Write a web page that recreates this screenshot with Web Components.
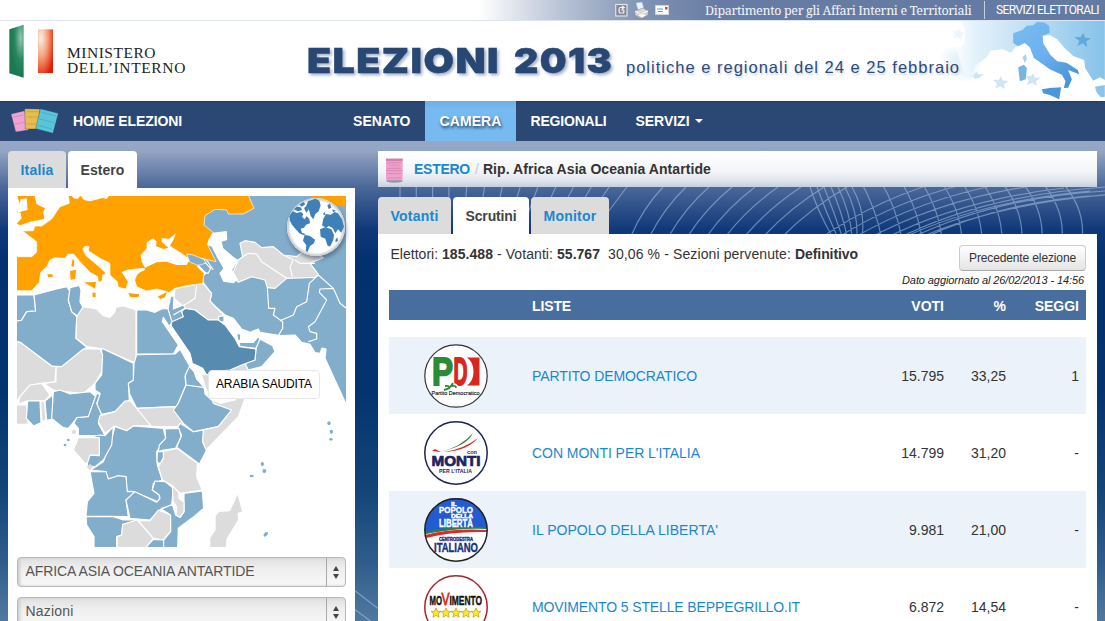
<!DOCTYPE html>
<html lang="it">
<head>
<meta charset="utf-8">
<title>Elezioni 2013</title>
<style>
html,body{margin:0;height:621px;overflow:hidden;background:#fff}
body{font:14px "Liberation Sans",Arial,sans-serif;color:#333}
</style>
</head>
<body>
<elezioni-app></elezioni-app>
<script>
const define=(name,html,after)=>customElements.define(name,class extends HTMLElement{
  connectedCallback(){
    if(this.shadowRoot)return;
    const r=this.attachShadow({mode:'open'});
    const t=document.createElement('template');
    t.innerHTML=typeof html==='function'?html(this):html;
    r.appendChild(t.content.cloneNode(true));
    if(after)after(this,r);
  }
});

/* Text whose tracking is adjusted so that it fills the width in its "w" attribute */
define('fit-text','<style>:host{display:inline-block;white-space:pre}span{display:inline-block}</style><span><slot></slot></span>',(el,r)=>{
  const s=r.querySelector('span'),w=+el.getAttribute('w'),n=el.textContent.length;
  el.style.width=w+'px';
  s.style.letterSpacing=((w-s.getBoundingClientRect().width)/n)+'px';
});

define('top-bar',`<style>
:host{display:flex;height:20px;align-items:center;color:#fff;border-bottom:1px solid #dfe5ee;background:linear-gradient(90deg,#fff 478px,#b9c4d6 560px,#8294b5 640px,#677ca3 720px,#637aa2);box-sizing:content-box}
.icons{display:flex;gap:6px;margin-left:615px;width:90px;align-items:center}
.dep{font:12.500px "Noto Serif","Droid Serif","DejaVu Serif Condensed",serif;color:#f3f5f9;line-height:19px}
.sep{width:1px;height:18px;background:#c6cfdd;margin:0 11px 0 13px}
.ser{font:12px Roboto,sans-serif;line-height:19px}
</style><div class="icons">
<svg width="13" height="14" viewBox="0 0 13 14"><rect x=".7" y="1.5" width="11.3" height="11.5" fill="#7f8796" stroke="#e2e4e6" stroke-width="1.2"/><path d="M9 4.5H5.2C3.6 4.5 3.6 10 5.2 10H8.8V7H6M7 3l2.2 1.5L7 6" fill="none" stroke="#f4f4f0" stroke-width="1.2"/></svg>
<svg width="15" height="17" viewBox="0 0 15 17"><path d="M2 1l6-1 2 7-6 1z" fill="#eef5ff" stroke="#9fbbe4" stroke-width=".7"/><path d="M1 9l8-3 5 3v4l-8 3-5-3z" fill="#d9d9d6" stroke="#8f9298" stroke-width=".6"/><path d="M1 9l5 3 8-3" fill="none" stroke="#fff"/><path d="M3 13l5-2 5 2-5 3z" fill="#f8f8f4" stroke="#aaa" stroke-width=".5"/></svg>
<svg width="14" height="10" viewBox="0 0 14 10"><rect x=".5" y=".5" width="13" height="9" fill="#fff" stroke="#cfd3da"/><rect x="10" y="2" width="2.5" height="2.5" fill="#e2451d"/><path d="M2 4h6M3 6.500h5" stroke="#5a9de2" stroke-width="1.2"/></svg>
</div><fit-text class="dep" w="266">Dipartimento per gli Affari Interni e Territoriali</fit-text><span class="sep"></span><fit-text class="ser" w="103">SERVIZI ELETTORALI</fit-text>`);

define('flag-logo',`<style>:host{display:block}svg{display:block}</style>
<svg width="46" height="56" viewBox="29 72 138 168"><defs>
<radialGradient id="g" cx=".8" cy=".25" r=".7"><stop stop-color="#8fc7b0"/><stop offset=".6" stop-color="#28875f"/><stop offset="1" stop-color="#197a52"/></radialGradient>
<radialGradient id="r" cx=".2" cy=".2" r=".95"><stop stop-color="#fff1e8"/><stop offset=".5" stop-color="#f39a72"/><stop offset="1" stop-color="#e21a05"/></radialGradient></defs>
<path d="M30 88L73 74V233L30 220Z" fill="url(#g)"/><path d="M116 88H161V219H116Z" fill="url(#r)"/></svg>`);

define('italy-art',`<style>:host{display:block}svg{display:block}</style>
<svg width="172" height="80" viewBox="1000 63 515 240"><defs>
<linearGradient id="l" gradientUnits="userSpaceOnUse" x1="1060" x2="1515" y1="0" y2="0"><stop stop-color="#fff"/><stop offset=".15" stop-color="#e2f1fb"/><stop offset=".5" stop-color="#bfdff4"/><stop offset="1" stop-color="#86c2e9"/></linearGradient>
<linearGradient id="w" gradientUnits="userSpaceOnUse" x1="1240" x2="1420" y1="70" y2="290"><stop stop-color="#79bcf2"/><stop offset=".45" stop-color="#6cb1ee"/><stop offset="1" stop-color="#3f8ad2"/></linearGradient>
<filter id="b"><feGaussianBlur stdDeviation="12"/></filter></defs>
<path d="M1030 160L1080 150 1150 150 1120 215 1110 235 1060 220Z" fill="#e4f2fb" filter="url(#b)"/>
<path d="M1080 63H1515V240L1500 232 1480 242 1456 205 1453 180 1420 168 1395 145 1372 118 1350 105 1328 108 1330 130 1345 160 1300 150 1275 128 1250 138 1232 158 1210 148 1172 152 1160 172 1125 198 1118 235 1095 225 1070 150 1094 130 1096 85Z" fill="url(#l)"/>
<path d="M1240 100L1268 90 1280 77 1300 76 1312 65 1335 68 1348 78 1350 98 1328 107 1330 130 1352 165 1372 184 1400 188 1434 210 1438 223 1405 210 1416 238 1405 263 1392 264 1397 244 1386 224 1350 208 1328 192 1302 174 1290 142 1275 129 1254 139 1240 128Z" fill="url(#w)"/>
<path d="M1326 268L1350 264 1384 262 1378 298 1350 285 1330 280Z" fill="#4b96db"/><path d="M1255 202L1272 194 1281 204 1278 238 1260 244Z" fill="#78b5e3"/><path d="M1268 172l10-10 3 14-6 14z" fill="#a9d2ef"/>
<path d="M1485 260l30-5v35l-12 2-12-14z" fill="#8cc4ea"/>
<path d="M1450 99l6 14 18 2-15 9 3 18-13-12-17 8 7-15-15-11 19-1z" fill="#5fa9dc"/>
<g fill="#cde5f5"><path d="M1203 228l5 13 19 2-14 9 2 15-13-8-16 6 6-14-13-12 18 1z"/><path d="M1300 220l5 13 17 0-13 10 1 14-13-8-16 6 6-14-8-14 14 2z"/><path d="M1078 84l4 12 13 2-10 8 0 13-11-7-12 4 4-13-8-9 13 0z" fill="#edf6fc"/><path d="M1130 214l5 9 17 0-13 10-14 4-6-10z"/></g></svg>`);

define('site-header',`<style>
:host{display:flex;height:80px;background:#fff;position:relative}
flag-logo{margin:3px 0 0 9px}
.min{margin:24px 0 0 12px;width:240px;font:15.500px "Liberation Serif",serif;line-height:15px;color:#222;display:flex;flex-direction:column}
h1{margin:15px 0 0;width:306px;height:50px}
h1 svg{display:block;overflow:visible;filter:drop-shadow(2px 2px 1.500px #a4b1c9)}
p{margin:34px 0 0 13px;font-size:16.500px;line-height:24px;color:#2c4b7b;text-shadow:1px 2px 2px #c8d0de}
italy-art{position:absolute;right:0;top:0;z-index:0}p,h1{position:relative;z-index:1}
</style><flag-logo></flag-logo><div class="min"><fit-text w="89">MINISTERO</fit-text><fit-text w="119">DELL’INTERNO</fit-text></div>
<h1><svg width="306" height="50" font-family="Inter,'Arial Black',sans-serif" font-weight="900" font-size="34.500" letter-spacing="1.300" fill="#294773" stroke="#294773" stroke-width=".5"><text x="0" y="37" textLength="193" lengthAdjust="spacingAndGlyphs">ELEZIONI</text><text x="207" y="37" textLength="99" lengthAdjust="spacingAndGlyphs">2013</text></svg></h1><p><fit-text w="334">politiche e regionali del 24 e 25 febbraio</fit-text></p><italy-art></italy-art>`);

define('ballot-icon',`<style>:host{display:block}svg{display:block}</style><svg width="50" height="28" viewBox="0 0 150 84">
<g stroke="#20365a" stroke-width="1"><path d="M3 24L44 14 56 72 17 78Z" fill="#efa3d3"/><path d="M44 8L90 9 84 69 46 69Z" fill="#e7bd4e"/><path d="M91 8L145 22 129 82 77 68Z" fill="#58c5da"/></g>
<g fill="none" stroke="#4b5665" stroke-width="1.500" opacity=".45"><path d="M8 34l32-7M14 55l31-6M50 17h34M51 33h32M50 54h30M95 19l43 11M89 39l43 11M84 58l42 11"/></g></svg>`);

define('nav-item',`<style>
:host{display:flex;align-items:center;font-weight:bold;color:#fff;padding:0 14.500px;height:40px;gap:5px}
:host([active]){background:linear-gradient(#6eaee3,#77baf0 8px);text-shadow:1px 2px 3px #1e3e68}
i{border:4px solid transparent;border-top-color:#fff;border-bottom:0}
</style><slot></slot>`,(el,r)=>{if(el.hasAttribute('menu'))r.appendChild(document.createElement('i'))});

define('site-nav',`<style>
:host{display:flex;height:40px;background:linear-gradient(#223d68,#2b4874 3px);align-items:center}
ballot-icon{margin:-3px 0 0 10px;width:63px}b{color:#fff;width:265.500px}
</style><ballot-icon></ballot-icon><b><fit-text w="109">HOME ELEZIONI</fit-text></b>
<nav-item><fit-text w="57.500">SENATO</fit-text></nav-item><nav-item active><fit-text w="62">CAMERA</fit-text></nav-item><nav-item><fit-text w="76">REGIONALI</fit-text></nav-item><nav-item menu><fit-text w="54">SERVIZI</fit-text></nav-item>`);

define('tab-item',`<style>
:host{display:block;box-sizing:border-box;height:37px;padding:1px 12.500px 0;line-height:36px;font-weight:bold;color:#1a87d2;background:#dcdcdc;border-radius:4px 4px 0 0}
:host([active]){background:#fff;color:#444}
</style><slot></slot>`);
define('tab-strip','<style>:host{display:flex;gap:2px}</style><slot></slot>');

define('globe-badge',`<style>:host{display:block;width:58px;height:58px;border-radius:50%;background:#fff;box-shadow:1px 3px 4px #3a4a5a99,inset 0 0 2px 2px #c9ced3}svg{display:block}</style>
<svg width="58" height="58" viewBox="863 158 174 174" fill="#3f80b9">
<path d="M870 212L880 198 892 203 905 200 912 206 908 214 916 222 922 212 930 222 932 234 920 238 914 247 904 250 908 262 918 266 914 270 900 264 888 250 878 238 872 226Z"/>
<path d="M884 192l8-8 12 2 4 8-12 4zM900 178l12-8 6 6-10 8zM914 188l8-6 5 12-6 8z"/>
<path d="M926 168L948 160 960 166 964 180 958 198 948 206 942 222 934 212 930 196 920 184Z"/>
<path d="M916 268L932 272 947 283 944 294 932 302 924 321 919 316 921 300 911 286Z"/>
<path d="M972 220L980 206 994 208 1006 200 1016 204 1028 222 1034 244 1026 262 1016 252 1008 264 1000 248 988 242 980 248 968 240Z"/>
<path d="M962 252L978 246 996 252 1004 268 1002 284 992 304 984 300 978 280 964 274Z"/><path d="M984 180l8-5 4 12-8 4zM998 192l12 4-8 5zM1008 284l6-8 2 10-7 5zM972 204l5-4 1 8-5 2z"/></svg>`);

define('world-map',`<style>
:host{display:block;position:relative;width:329px;height:351px;flex:none}
svg{display:block}
.b path{fill:#82aecb;stroke:#fff;stroke-width:3.500;stroke-linejoin:round}.b .g{fill:#dcdcdc}.o{fill:#ffa200}.w path{fill:#fff}
globe-badge{position:absolute;left:270px;top:2px}
.tip{position:absolute;left:191px;top:174px;width:110px;height:27px;border:1px solid #e8e8e8;border-radius:4px;background:#fff;color:#000;font-size:12px;line-height:27px;text-align:center;box-sizing:content-box}
</style>
<svg width="329" height="351" viewBox="51 153 987 1053">
<g class="b">
<path d="M745 150H1042V785L975 640 978 612 966 609 960 625 945 623 930 598 905 592 885 570 840 572 780 562 775 552 750 562 725 552 700 520 675 510 630 470 634 445 608 410 608 392 618 385 560 325 600 200Z"/>
<path class="g" d="M720 295L735 287 765 292 785 308 820 305 850 330 890 335 905 322 935 318 970 338 930 355 955 388 945 397 860 400 825 430 802 428 795 405 755 395 715 412 698 385 715 345 728 335Z"/>
<path class="g" d="M525 430L608 415 635 445 630 468 670 510 655 525 625 525 585 495 555 490 545 480 522 460Z"/>
<path d="M512 455L522 452 520 492 550 480 557 490 545 500 550 515 530 530 514 530 504 492Z"/>
<path class="g" d="M735 645L745 675 700 700 620 740 605 690 640 680Z"/>
<path d="M768 608L765 645 735 655 745 675 785 665 825 620 818 602 780 582 770 592Z"/>
<path d="M717 592L760 592 775 575 780 582 768 610 720 605Z"/><path d="M710 565l12 2v20l-9-2zM655 515l17-3v20l-15-3z"/>
<path style="fill:#588bb0" d="M555 490L585 495 625 525 655 525 675 540 705 580 718 605 768 612 765 645 725 660 690 675 640 680 620 690 608 670 577 655 570 625 515 545 512 532 550 515 545 500Z"/>
<path d="M45 450H102L107 498 80 500 66 526 45 530Z"/>
<path d="M45 528L64 526 80 500 107 498 102 450 170 432 200 425 210 440 205 465 215 500 230 515 228 580 260 607 185 665 155 663 60 592 45 590Z"/>
<path d="M210 428L238 421 243 435 240 470 250 490 235 515 215 500 205 465Z"/>
<path class="g" d="M250 485L290 492 310 512 330 517 345 500 347 487 370 482 408 495V655L310 612 262 605 228 580 230 515Z"/>
<path d="M410 495L440 495 465 502 485 492 503 490 516 530 508 545 490 517 487 530 535 600 520 627H410Z"/>
<path d="M410 629L525 627 540 613 570 665 555 695 558 720 530 785 410 790 388 745 385 715 400 705 402 655Z"/>
<path d="M305 610L400 655V705L385 715 388 765 345 800 305 808 290 780 300 745 285 735 285 715 305 690Z"/>
<path class="g" d="M250 612L300 612 308 630 305 680 285 715 250 745 190 740 160 735 130 715 168 710 168 665 185 665Z"/>
<path class="g" d="M45 590L60 592 155 663 168 665 165 710 125 715 90 722 60 755 45 775Z"/>
<path class="g" d="M55 778L60 755 90 720 125 715 150 750 135 767 80 768Z"/>
<path class="g" d="M45 780H80L85 838H45Z"/><path d="M83 768L120 767 123 833 100 843 79 820Z"/><path class="g" d="M122 768L133 770 138 826 126 829Z"/><path d="M135 768L158 750V822L140 826Z"/>
<path d="M160 740L180 735 210 747 270 740 287 755 265 815 228 822 205 850 190 848 155 820Z"/>
<path d="M290 745L300 748 290 775 305 810 295 835 315 872H235V850L222 835 230 818 265 815Z"/>
<path class="g" d="M300 812L345 800 375 768 390 767 455 842 400 843 380 857 345 842 315 865 295 830Z"/>
<path class="g" d="M410 790L525 785 550 838 530 845 455 845Z"/>
<path d="M345 845L380 857 400 843 490 850 497 880 470 920 472 960 487 1005 460 1015 457 1035 478 1050V1072L402 1040 380 1038 378 995 345 1000 320 1000 318 980 272 975 310 950 330 900Z"/>
<path d="M300 870L315 872 340 845 335 900 310 945 285 965 262 965V930L298 932V883L275 875Z"/>
<path class="g" d="M235 878H298V930L270 930 262 955 255 955 220 915Z"/>
<path d="M270 980H318L325 1002 355 992 378 995 382 1040H402V1055L378 1065 385 1115 258 1113 262 1070 282 1045Z"/>
<path d="M378 1065L405 1040 470 1072 480 1060 478 1050 457 1035 465 1008 495 1010 520 1030 515 1080 485 1090 450 1125 390 1120Z"/>
<path d="M258 1115H340L370 1125 415 1125 368 1140 365 1170 350 1175V1212H282V1175L260 1140Z"/>
<path class="g" d="M368 1138L412 1125 460 1180 435 1212H352V1175L365 1170Z"/>
<path class="g" d="M415 1127L450 1127 475 1095 512 1110V1160L490 1185 460 1180Z"/>
<path d="M435 1210L460 1183 491 1185V1210Z"/>
<path d="M485 1093L517 1078 527 1110 540 1117 552 1100V1045L607 1038 611 1090 575 1120 535 1150 533 1212H491V1185L512 1160V1110Z"/>
<path class="g" d="M517 1020L537 1043 537 1060 552 1072V1100L540 1117 528 1110 530 1085 519 1070Z"/>
<path class="g" d="M488 920L530 910 592 955 590 995 607 1035 540 1045 515 1020 487 1005 475 965 490 940Z"/>
<path d="M540 835L580 860 612 855 608 890 620 915 598 957 530 907 545 870 533 848Z"/>
<path d="M495 852L537 850 543 875 527 910 490 915 475 920 478 900 497 880Z"/><path d="M472 920l18 0v18l-10 18-9-5z"/>
<path d="M558 720L612 725 615 747 640 770 695 795 655 845 580 860 550 835 520 795 535 775Z"/>
<path d="M556 690L568 665 582 680 590 702 620 735 610 727 558 720Z"/>
<path class="g" d="M638 765L660 775 705 765 725 735 735 760 715 815 618 915 608 890 610 855 655 845 695 795 640 775Z"/>
<path style="fill:none" d="M728 335L745 325 770 327 785 350 860 400M850 330L880 345 870 365 877 395M885 345L900 355 945 355M802 428L806 490 825 490 820 510 848 530 848 550 835 572M840 527L880 510 890 485 920 470 928 415 955 390 1000 430 960 432 958 442 980 465 945 530 925 545 930 560 950 565 950 582 925 590M1000 430L1020 475 1042 492M590 420L585 460 550 482M555 325L620 345 640 375M600 350L615 352 632 370 625 385 600 380M555 490L520 510"/>
</g>
<g class="o">
<path d="M205 150H745L762 190 730 207H685L680 195 645 193 615 212 612 240 640 263 622 297 648 350 605 340 620 355 600 350 592 365 612 385 608 416 570 420 525 430 507 443 495 438 470 432 440 438 410 425 404 405 410 390 430 370 400 373 370 380 386 405 378 432 355 427 352 410 330 390 330 355 300 340 265 317 267 305 256 303 248 312 258 332 298 365 318 385 308 390 307 407 295 412 293 395 270 382 240 350 222 328 205 327 195 340 165 338 150 345 140 365 122 382 118 412 95 437H45V335H95L110 322V290L68 258 100 257 105 243 125 243 155 222 180 185 208 175Z" stroke="#fff" stroke-width="2"/>
<path d="M51 150H103L110 178 135 190 130 200 133 222 90 230 60 241 50 236 65 220 62 205 51 200 62 185Z"/><path d="M252 412L288 411 285 431ZM210 378L228 374 226 402 212 404ZM218 342L223 347 221 367 214 362ZM142 388h16v8h-14zM277 443h10v13h-9zM385 444l32 4v7l-26 2zM473 455l28-14-6 16-14 5zM935 150h107v35l-42-3-65-22z"/></g>
<g class="w"><path d="M62 163l18-3 3 35-17 4-15 7 8-30zM213 150h30l-10 12-12-2zM240 150h88l-8 12-12-3-38 10-18-4z"/>
<path d="M422 330L440 310 440 292 460 280 470 290 468 303 490 312 505 308 485 290V280L508 281 528 265 520 285 510 302 545 325 570 343 560 360 530 360 500 350 470 352 435 368 425 350Z"/>
<path d="M365 382L385 373 412 378 434 368V376L405 388 398 400 410 428 390 435 384 410Z"/>
<path d="M638 263L680 258 682 285 665 290 670 310 700 335 715 345 697 375 715 405 700 415 670 410 658 385 670 370 650 335 635 305 622 300 625 285Z"/></g>
<g fill="#82aecb"><path d="M560 327l20 3 33 14 3 11-22 6-25-10z" stroke="#fff" stroke-width="2"/><circle cx="205" cy="885" r="4"/><circle cx="195" cy="900" r="4"/><ellipse cx="987" cy="835" rx="5" ry="6"/><ellipse cx="994" cy="860" rx="5" ry="6"/><ellipse cx="993" cy="883" rx="5" ry="4"/><ellipse cx="787" cy="957" rx="5" ry="6"/><ellipse cx="793" cy="978" rx="6" ry="6"/><ellipse cx="755" cy="993" rx="6" ry="4"/><path d="M790 1170l6-8 8-1-1 8-9 7z"/></g>
<g fill="#dcdcdc"><path d="M713 1049L726 1100 713 1103 714 1125 680 1180 677 1206H631V1178L647 1155V1112L658 1101 690 1099Z"/><circle cx="222" cy="861" r="6"/><path d="M260 965l10-8 9 6-10 13z"/></g>
</svg><globe-badge></globe-badge><div class="tip"><fit-text w="96">ARABIA SAUDITA</fit-text></div>`);

define('select-box',`<style>
:host{display:flex;flex:none;box-sizing:border-box;width:329px;height:30px;border:1px solid #b9b9b9;border-radius:4px;background:linear-gradient(#e0e0e0,#efefef 40%,#f8f8f8);box-shadow:inset 2px 0 3px #ccc;line-height:26px;color:#555}
div{flex:1;padding-left:7.500px}span{width:18px;border-left:1px solid #aaa;display:flex;flex-direction:column;gap:3px;align-items:center;justify-content:center}
i{border:3px solid transparent}.u{border-bottom:5px solid #444;border-top:0}.d{border-top:5px solid #444;border-bottom:0}
</style><div><slot></slot></div><span><i class="u"></i><i class="d"></i></span>`);

define('side-panel',`<style>
:host{display:block;width:347px}
.p{background:#fff;padding:8px 9px 0;height:425px;display:flex;flex-direction:column;gap:10px}
</style><tab-strip><tab-item><fit-text w="33">Italia</fit-text></tab-item><tab-item active><fit-text w="44">Estero</fit-text></tab-item></tab-strip>
<div class="p"><world-map></world-map><select-box><fit-text w="229">AFRICA ASIA OCEANIA ANTARTIDE</fit-text></select-box><select-box><fit-text w="48">Nazioni</fit-text></select-box></div>`);

define('crumb-bar',`<style>
:host{display:flex;align-items:center;height:36px;background:linear-gradient(#fff,#f3f5f8 55%,#e2e7ef 80%,#c5cfdf);font-weight:bold;color:#333}
svg{margin:2px 11px 0 8px}.l{color:#1a87d2}.s{color:#ccc;font-weight:normal;padding:0 4px 0 5px}
</style><svg width="17" height="25" viewBox="0 0 51 75"><path d="M2 66h47v5q-23 6-47 0z" fill="#9098a5"/><path d="M0 2h50v65H0z" fill="#f0a0cc"/><path d="M0 2h50v7H0z" fill="#d180ac"/><path d="M5 14h40M5 31h40M0 38h50M5 47h40M5 60h40M8 20l8 3 8-3 8 3 8-3" stroke="#cf7fab" stroke-width="2" fill="none"/></svg>
<fit-text class="l" w="56">ESTERO</fit-text><span class="s">/</span><fit-text w="228">Rip. Africa Asia Oceania Antartide</fit-text>`);

define('vote-summary',`<style>
:host{display:flex;justify-content:space-between;height:56px;padding:0 0 0 1.500px}
.t{padding-top:12px;line-height:17px;white-space:pre;display:flex}
.r{display:flex;flex-direction:column;align-items:flex-end}
button{box-sizing:border-box;width:127px;height:26px;margin:11px 0 3px;padding:0;border:1px solid #bbb;border-color:#ccc #ccc #aaa;border-radius:4px;background:linear-gradient(#fff,#e4e4e4);font:12px "Liberation Sans",sans-serif;color:#333}
em{font-size:11px;line-height:13px;margin-right:2px;color:#222}b{font-weight:bold}
</style><div class="t"><fit-text w="51.500">Elettori: </fit-text><b><fit-text w="51">185.488</fit-text></b><fit-text w="64"> - Votanti: </fit-text><b><fit-text w="43">55.767</fit-text></b><fit-text w="195">  30,06 % - Sezioni pervenute: </fit-text><b><fit-text w="63">Definitivo</fit-text></b></div>
<div class="r"><button><fit-text w="107">Precedente elezione</fit-text></button><em><fit-text w="182">Dato aggiornato al 26/02/2013 - 14:56</fit-text></em></div>`);

/* Party badges: label() sets a line of text w units wide, condensed by the factor k */
const label=(x,y,size,w,k,text,more='')=>`<text transform="translate(${x} ${y}) scale(${k} 1)" font-size="${size}" textLength="${w/k}" lengthAdjust="spacingAndGlyphs" ${more}>${text}</text>`;
const ring=(c,inner,w=1.500)=>`<circle cx="32" cy="32" r="31.200" fill="#fff"/>${inner}<circle cx="32" cy="32" r="31.200" fill="none" stroke="${c}" stroke-width="${w}"/>`;
const logos={
pd:ring('#333','<path d="M43 13.500H55.500V41.500H43Q49.500 37 49.500 27.500T43 13.500Z" fill="#d8271c"/><g font-weight="bold" stroke-width="1.800">'+label(8,41,38,21,.8,'P','fill="#2c8b38" stroke="#2c8b38"')+label(29.5,41,38,14,.5,'D','fill="#d8271c" stroke="#d8271c"')+'</g><path d="M20 46q6-1 9-6M21 42q5-1 4 3M28 41q4 0 5 3" stroke="#fff" stroke-width="4" fill="none"/><path d="M20 46q6-1 9-7M21 42q5-1 4 3M27 42q5-1 5 2" stroke="#2c8b38" stroke-width="1.800" fill="none"/>'+label(7.5,51,6,48,.9,'Partito Democratico','fill="#111" stroke="#111" stroke-width=".15"'),1.2),
monti:ring('#1d2350','<path d="M17 30.500Q37 26 49 12Q43 25 17 30.500" fill="#27863b"/><path d="M20 31Q40 28 54 17Q43 30 20 31M8 30l3-2 6 3z" fill="#dc2b28"/><g font-weight="bold" fill="#1d2463">'+label(43,32.5,5.5,10,1,'con')+label(7.5,45.3,14,49,.97,'MONTI','stroke="#1d2463" stroke-width=".7"')+label(15,51.7,5.2,33,.95,'PER L’ITALIA')+'</g>'),
pdl:ring('#222','<path d="M1 33A31 31 0 0 1 63 29Q40 29 1 36Z" fill="#245bd0"/><path d="M1 34Q22 28 63 29V31Q28 30 1 36Z" fill="#26814d"/><path d="M1 37Q28 30 63 32V34Q28 33 2 40Z" fill="#d82c28"/><g font-weight="bold" fill="#fff" stroke="#fff" stroke-width=".35">'+label(27,7.5,5.5,6,1,'IL')+label(15,15.3,8.5,34,.85,'POPOLO')+label(27,20.3,4.6,22,1.2,'DELLA')+label(15,29.3,10,34,.75,'LIBERTÀ')+'</g><g font-weight="bold" fill="#17317f" stroke="#17317f" stroke-width=".4">'+label(15,42.5,5.5,34,.7,'CENTRODESTRA')+label(10,53.5,12.5,44,.7,'ITALIANO')+'</g>'),
m5s:ring('#a9242a','<g font-weight="bold" fill="#111" stroke="#111" stroke-width=".4">'+label(5.5,30,12,12.5,.65,'MO')+label(25.5,30,12,32.5,.7,'IMENTO')+'</g>'+label(17.5,30,16,8,.8,'V','fill="#d92a20" stroke="#d92a20" stroke-width=".8"')+[12,22,32,42,52].map(x=>`<path d="M${x} 33l1.400 3.200 3.500.300-2.700 2.300.900 3.400-3.100-1.800-3.100 1.800.900-3.400-2.700-2.300 3.500-.300z" fill="#ffe82c" stroke="#b99a11" stroke-width=".7"/>`).join(''),1.500)};
define('party-logo',el=>`<style>:host{display:block}svg{display:block;font-family:"Liberation Sans"}</style><svg width="64" height="64" viewBox="0 0 64 64">${logos[el.getAttribute('name')]}</svg>`);

define('result-row',`<style>
:host{display:grid;grid-template-columns:143px 1fr 70px 62px 80px;height:77px;align-items:center;box-sizing:border-box;padding:1px 0 0}
:host([odd]){background:#ebf2fa}
:host([head]){height:30px;background:#476e9f;color:#fff;font-weight:bold;padding:2px 0 0;--link:#fff}
.n{color:var(--link,#1a87d2)}.v{text-align:right}.s{padding-right:7px}.logo{padding-left:35px}
</style><div class="logo"><slot name="logo"></slot></div><div class="n"><slot></slot></div><div class="v"><slot name="voti"></slot></div><div class="v"><slot name="pct"></slot></div><div class="v s"><slot name="seggi"></slot></div>`);

define('main-panel',`<style>
:host{display:block;width:719px}
tab-strip{margin-top:10px}
.p{background:#fff;height:400px;padding:0 11px}
.gap{height:17px}
</style><crumb-bar></crumb-bar>
<tab-strip><tab-item><fit-text w="48">Votanti</fit-text></tab-item><tab-item active><fit-text w="51">Scrutini</fit-text></tab-item><tab-item><fit-text w="53">Monitor</fit-text></tab-item></tab-strip>
<div class="p"><vote-summary></vote-summary>
<result-row head><fit-text w="39">LISTE</fit-text><span slot="voti">VOTI</span><span slot="pct">%</span><span slot="seggi">SEGGI</span></result-row><div class="gap"></div>
<result-row odd><party-logo slot="logo" name="pd"></party-logo><fit-text w="165">PARTITO DEMOCRATICO</fit-text><span slot="voti">15.795</span><span slot="pct">33,25</span><span slot="seggi">1</span></result-row>
<result-row><party-logo slot="logo" name="monti"></party-logo><fit-text w="168">CON MONTI PER L'ITALIA</fit-text><span slot="voti">14.799</span><span slot="pct">31,20</span><span slot="seggi">-</span></result-row>
<result-row odd><party-logo slot="logo" name="pdl"></party-logo><fit-text w="186">IL POPOLO DELLA LIBERTA'</fit-text><span slot="voti">9.981</span><span slot="pct">21,00</span><span slot="seggi">-</span></result-row>
<result-row><party-logo slot="logo" name="m5s"></party-logo><fit-text w="268">MOVIMENTO 5 STELLE BEPPEGRILLO.IT</fit-text><span slot="voti">6.872</span><span slot="pct">14,54</span><span slot="seggi">-</span></result-row></div>`);

/* Backdrop with fine curved lines fanning across the blue area */
define('net-backdrop',`<style>:host{display:block}svg{display:block}</style><svg width="1105" height="480" viewBox="0 141 1105 480"></svg>`,(el,r)=>{
  let d='';
  for(let i=0;i<14;i++){const x=400+i*16.300,k=Math.max(0,i-3);d+=`M${x+k*1.500} 187L${x-k*2.200} 236`}
  for(let i=0;i<9;i++){const x=655+i*19;d+=`M${x+8+i*4} 187Q${x-12+i*2} 208 ${x-24} 236`}
  for(let i=0;i<7;i++)d+=`M${810+i*7} 187Q${818+i*8} 212 ${832+i*5} 236`;
  for(let i=0;i<11;i++)d+=`M${860+i*20} 180Q${876+i*21} 208 ${882+i*20} 240`;
  for(let i=0;i<7;i++)d+=`M${818+i*16} 240Q${880+i*20} ${196+i} ${960+i*26} ${176+i*3}`;
  for(let i=0;i<3;i++)d+=`M${895+i*12} 240Q${980+i*12} ${196+i*2} 1105 ${187+i*4}`;
  d+='M350 587L380 610M350 606L380 628';
  r.querySelector('svg').innerHTML=`<path d="${d}" fill="none" stroke="#a9c4e3" stroke-opacity=".55" stroke-width="1.200"/>`;
});

define('elezioni-app',`<style>
:host{display:flex;flex-direction:column;width:1105px;height:621px;overflow:hidden}
main{position:relative;display:flex;gap:23px;padding:10px 8px 0;height:470px;background:linear-gradient(#97a7c6,#94a4c4 10px,#4b6899 46px,#11397a 88px,#02316f 120px,#04346e 250px,#134578 350px,#2f5c8b 420px,#50799f)}
net-backdrop{position:absolute;left:0;top:0}side-panel,main-panel{position:relative}
</style><top-bar></top-bar><site-header></site-header><site-nav></site-nav>
<main><net-backdrop></net-backdrop><side-panel></side-panel><main-panel></main-panel></main>`);
</script>
</body>
</html>
